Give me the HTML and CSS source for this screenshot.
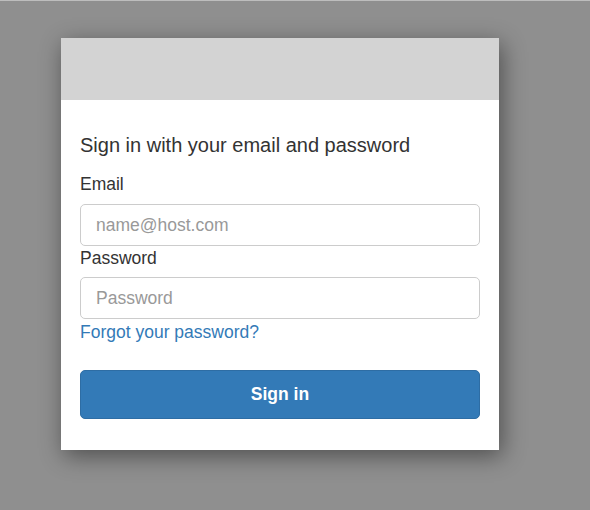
FILE: index.html
```html
<!DOCTYPE html>
<html lang="en">
<head>
<meta charset="utf-8">
<title>Sign in</title>
<link rel="stylesheet" href="styles.css">
</head>
<body>
<div class="topline"></div>
<div class="card">
  <div class="card-header"></div>
  <div class="card-body">
    <h1 class="title">Sign in with your email and password</h1>
    <label class="label" for="email">Email</label>
    <input class="field" id="email" type="text" placeholder="name@host.com">
    <label class="label label-pw" for="password">Password</label>
    <input class="field" id="password" type="password" placeholder="Password">
    <a class="forgot" href="#">Forgot your password?</a>
    <button class="btn" type="button">Sign in</button>
  </div>
</div>
</body>
</html>
```
FILE: styles.css
```css
html, body {
  margin: 0;
  padding: 0;
}
body {
  background: #8f8f8f;
  font-family: "Liberation Sans", Arial, sans-serif;
  color: #333;
  width: 590px;
  height: 510px;
  overflow: hidden;
}
.topline {
  height: 1px;
  background: #bdbdbd;
}
.card {
  margin: 37px 0 0 61px;
  width: 438px;
  background: #fff;
  box-shadow: 3px 6px 22px rgba(0, 0, 0, 0.45);
}
.card-header {
  height: 62px;
  background: #d3d3d3;
}
.card-body {
  padding: 33px 19px 31px 19px;
  display: flex;
  flex-direction: column;
}
.title {
  margin: 0;
  font-size: 20px;
  line-height: 24px;
  font-weight: normal;
  color: #333;
}
.label {
  display: block;
  font-size: 17.5px;
  line-height: 20px;
  margin-top: 17px;
  margin-bottom: 10px;
}
.label-pw {
  margin-top: 2px;
  margin-bottom: 9px;
}
.field {
  box-sizing: border-box;
  height: 42px;
  width: 100%;
  margin: 0;
  border: 1px solid #ccc;
  border-radius: 5px;
  padding: 0 15px;
  font-family: "Liberation Sans", Arial, sans-serif;
  font-size: 17.5px;
  color: #555;
  background: #fff;
  outline: none;
}
.field::placeholder {
  color: #999;
}
.forgot {
  display: block;
  margin-top: 3px;
  font-size: 17.5px;
  line-height: 20px;
  color: #337ab7;
  text-decoration: none;
}
.btn {
  box-sizing: border-box;
  margin-top: 28px;
  height: 49px;
  width: 100%;
  border: 1px solid #2e6da4;
  border-radius: 5px;
  background: #337ab7;
  color: #fff;
  font-family: "Liberation Sans", Arial, sans-serif;
  font-size: 17.5px;
  font-weight: bold;
  cursor: pointer;
}
```
